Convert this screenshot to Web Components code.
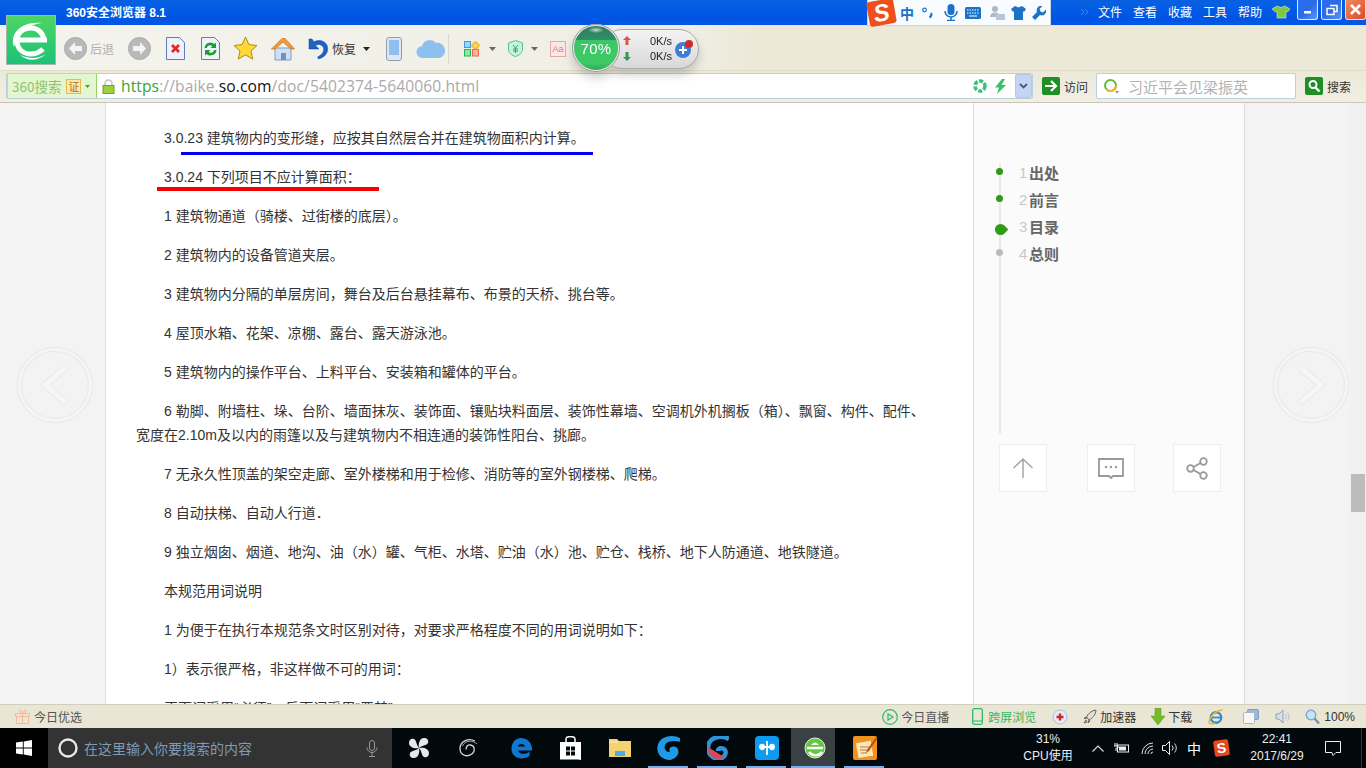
<!DOCTYPE html>
<html lang="zh-CN">
<head>
<meta charset="utf-8">
<title>360安全浏览器 8.1</title>
<style>
  html, body { margin: 0; height: 100%; overflow: hidden; }
  body {
    display: grid;
    grid-template-rows: 25px 45px 33px 601px 24px 40px;
    width: 1366px;
    height: 768px;
    position: relative;
    font-family: "Liberation Sans", "Noto Sans CJK SC", sans-serif;
  }
</style>
</head>
<body>
<title-bar></title-bar>
<tool-bar></tool-bar>
<address-bar></address-bar>
<baike-page>
  <baike-article>
    <p>3.0.23 建筑物内的变形缝，应按其自然层合并在建筑物面积内计算。</p>
    <p>3.0.24 下列项目不应计算面积：</p>
    <p>1 建筑物通道（骑楼、过街楼的底层）。</p>
    <p>2 建筑物内的设备管道夹层。</p>
    <p>3 建筑物内分隔的单层房间，舞台及后台悬挂幕布、布景的天桥、挑台等。</p>
    <p>4 屋顶水箱、花架、凉棚、露台、露天游泳池。</p>
    <p>5 建筑物内的操作平台、上料平台、安装箱和罐体的平台。</p>
    <p>6 勒脚、附墙柱、垛、台阶、墙面抹灰、装饰面、镶贴块料面层、装饰性幕墙、空调机外机搁板（箱）、飘窗、构件、配件、宽度在2.10m及以内的雨篷以及与建筑物内不相连通的装饰性阳台、挑廊。</p>
    <p>7 无永久性顶盖的架空走廊、室外楼梯和用于检修、消防等的室外钢楼梯、爬梯。</p>
    <p>8 自动扶梯、自动人行道．</p>
    <p>9 独立烟囱、烟道、地沟、油（水）罐、气柜、水塔、贮油（水）池、贮仓、栈桥、地下人防通道、地铁隧道。</p>
    <p>本规范用词说明</p>
    <p>1 为便于在执行本规范条文时区别对待，对要求严格程度不同的用词说明如下：</p>
    <p>1）表示很严格，非这样做不可的用词：</p>
    <p>正面词采用“必须”，反面词采用“严禁”；</p>
  </baike-article>
  <baike-sidebar></baike-sidebar>
</baike-page>
<status-bar></status-bar>
<task-bar></task-bar>
<app-logo></app-logo>
<speed-ball></speed-ball>
<ime-bar></ime-bar>

<script>
// Базовый класс: разметка и стили лежат в статическом поле html
class ShadowPart extends HTMLElement {
  connectedCallback() {
    if (this.shadowRoot) return;
    const template = document.createElement('template');
    template.innerHTML = this.constructor.html;
    this.attachShadow({ mode: 'open' }).append(template.content.cloneNode(true));
  }
}

const CJK = '"Noto Sans CJK SC", sans-serif';
const caret = (c = '#444') => `<svg width="7" height="4" viewBox="0 0 7 4"><path d="M0 0h7L3.5 4z" fill="${c}"/></svg>`;

class TitleBar extends ShadowPart {
  static html = `
    <style>
      :host { display: flex; align-items: center; background: linear-gradient(#0a5fe0, #0560e6 20%, #0054e3 70%, #0058e6); color: #fff; font: 12px "Liberation Sans", ${CJK}; padding-bottom: 2px; box-sizing: border-box; }
      .title { margin-left: 66px; font-weight: bold; font-size: 12px; }
      .chev { margin-left: auto; width: 10px; margin-right: 8px; }
      .menu { display: flex; gap: 11px; }
      .shirt { margin-left: 10px; }
      .btns { display: flex; gap: 3px; margin-left: 7px; align-self: flex-start; }
      .btn { width: 19px; height: 19px; border: 1px solid #dfe8fb; border-top: 0; border-radius: 0 0 3px 3px; background: linear-gradient(135deg, #2b6ff0, #2a6ae6 50%, #5f95f5); display: flex; align-items: center; justify-content: center; }
      .close { background: linear-gradient(135deg, #f08a5e, #de4a24); border-color: #f6d8cc; }
    </style>
    <span class="title">360安全浏览器 8.1</span>
    <svg class="chev" viewBox="0 0 10 10" height="10"><path d="M1 2l3 3-3 3M5 2l3 3-3 3" fill="none" stroke="#4f7fd8" stroke-width="1"/></svg>
    <div class="menu"><span>文件</span><span>查看</span><span>收藏</span><span>工具</span><span>帮助</span></div>
    <svg class="shirt" width="18" height="14" viewBox="0 0 18 14"><path d="M5 1l4 1.5L13 1l5 3-2.500 3-1.500-1v7H5V6L3.500 7 0 4z" fill="#7ec83e" stroke="#d8f0c0" stroke-width=".6"/></svg>
    <div class="btns">
      <div class="btn"><svg width="9" height="9" viewBox="0 0 9 9"><rect x="1" y="6" width="7" height="2.500" fill="#fff"/></svg></div>
      <div class="btn"><svg width="12" height="12" viewBox="0 0 12 12"><path d="M4 1.500h7v6H8M1 4.500h7v6H1z" fill="none" stroke="#fff" stroke-width="1.500"/></svg></div>
      <div class="btn close"><svg width="13" height="13" viewBox="0 0 13 13"><path d="M2 2l9 9M11 2l-9 9" stroke="#fff" stroke-width="2.600"/></svg></div>
    </div>`;
}

class ToolBar extends ShadowPart {
  static html = `
    <style>
      :host { display: flex; align-items: center; background: linear-gradient(90deg, #f4f3ed, #f0efe5 50%, #ece9d8 55%); font: 12px ${CJK}; color: #333; padding-left: 64px; box-sizing: border-box; padding-top: 2px; }
      svg { display: block; flex: none; }
      span { flex: none; }
    </style>
    <svg width="23" height="23" viewBox="0 0 23 23"><circle cx="11.500" cy="11.500" r="11" fill="#b9b9b9" stroke="#a8a8a8"/><path d="M11 5l-6 6.500 6 6.500v-4h7V9h-7z" fill="#f4f4f4"/></svg>
    <span style="margin-left:3px;color:#b0b0b0">后退</span>
    <svg style="margin-left:14px" width="23" height="23" viewBox="0 0 23 23"><circle cx="11.500" cy="11.500" r="11" fill="#b9b9b9" stroke="#a8a8a8"/><path d="M12 5l6 6.500-6 6.500v-4H5V9h7z" fill="#f4f4f4"/></svg>
    <svg style="margin-left:15px" width="19" height="23" viewBox="0 0 19 23"><path d="M.5.5h13l5 5v17H.5z" fill="#eef2fc" stroke="#5d7fb8"/><path d="M6 8l7 7M13 8l-7 7" stroke="#e8281e" stroke-width="2.800"/></svg>
    <svg style="margin-left:16px" width="19" height="23" viewBox="0 0 19 23"><path d="M.5.5h13l5 5v17H.5z" fill="#eef2fc" stroke="#5d7fb8"/><path d="M3.500 11a6 6 0 0 1 10-4l1.500-1.500v5.500h-5.500l1.800-1.800a3.400 3.400 0 0 0-5.600 1.800zM15.500 13a6 6 0 0 1-10 4l-1.500 1.500V13h5.500l-1.800 1.800a3.400 3.400 0 0 0 5.600-1.800z" fill="#17a02a"/></svg>
    <svg style="margin-left:13px" width="25" height="25" viewBox="0 0 25 25"><path d="M12.500 1l3.400 7.600 8.100.9-6 5.500 1.700 8.100-7.200-4.200-7.200 4.200L7 15 1 9.500l8.100-.9z" fill="#ffd83c" stroke="#b78a10"/></svg>
    <svg style="margin-left:13px" width="24" height="25" viewBox="0 0 24 25"><path d="M4 12v12h16V12z" fill="#cfe0f6" stroke="#7d9dc4"/><path d="M10 24v-7h5v7z" fill="#6f92bf"/><path d="M0.500 13L11 2.500h3L23.500 13 20 13 12 6l-8 7z" fill="#f29a3c" stroke="#c66c18" stroke-width=".7"/></svg>
    <svg style="margin-left:12px" width="22" height="23" viewBox="0 0 22 23"><path d="M2 2v10h10L8.500 8.500c3-2 7-1 8 2.500 1 4-2 7-6 9l1 2c6-1.500 10-6 9-12-1-5.500-8-8.500-13.500-5L5 2z" fill="#1d62c6" stroke="#124a9e" stroke-width=".5"/></svg>
    <span style="margin-left:3px">恢复</span>
    <span style="margin-left:7px">${caret('#222')}</span>
    <svg style="margin-left:16px" width="16" height="24" viewBox="0 0 16 24"><rect x=".5" y=".5" width="15" height="23" rx="2.500" fill="#dfe6ef" stroke="#8d9db3"/><rect x="3" y="3" width="10" height="15" fill="#8fbff0"/></svg>
    <svg style="margin-left:14px" width="29" height="19" viewBox="0 0 29 19"><path d="M7 19a6 6 0 0 1-1-12 8 8 0 0 1 14-3 6.500 6.500 0 0 1 3 15z" fill="#8dc0ee"/></svg>
    <span style="margin-left:3px;width:1px;height:30px;background:#dcd9c8"></span>
    <svg style="margin-left:15px" width="16" height="16" viewBox="0 0 16 16"><rect x=".5" y=".5" width="6" height="6" fill="#9fd4fb" stroke="#3d9ae8"/><rect x=".5" y="8.500" width="6" height="6.500" fill="#8fe8a8" stroke="#25b84f"/><rect x="8.500" y="8.500" width="6" height="6.500" fill="#f9b3a3" stroke="#ea6a50"/><path d="M10 1h3v2h2v3h-2v2h-3V6H8V3h2z" fill="#ffd75a" stroke="#d99b12" stroke-width=".7"/></svg>
    <span style="margin-left:9px">${caret('#666')}</span>
    <svg style="margin-left:12px" width="15" height="17" viewBox="0 0 15 17"><path d="M7.500.5L14.500 3v6c0 4-3.500 6.500-7 7.500C4 15.500.5 13 .5 9V3z" fill="#c8f2de" stroke="#4cc592"/><path d="M5 5l2.500 3L10 5M5 9h5M5 11h5M7.500 8v5" fill="none" stroke="#25a870"/></svg>
    <span style="margin-left:8px">${caret('#666')}</span>
    <span style="margin-left:12px;width:14px;height:14px;border:1px solid #e6a7a7;background:#fbe8e6;color:#d97c7c;font:9px 'Liberation Sans';display:flex;align-items:center;justify-content:center">Aa</span>`;
}

class AddressBar extends ShadowPart {
  static html = `
    <style>
      :host { display: flex; align-items: flex-start; background: linear-gradient(#ece9d8, #f1efe4); border-top: 1px solid #e0dcc8; border-bottom: 1px solid #c9c6b6; box-sizing: border-box; padding: 2px 0 0 6px; font: 12px ${CJK}; color: #333; }
      .box { display: flex; align-items: center; height: 26px; box-sizing: border-box; border: 1px solid #bcd0de; border-radius: 2px; background: #fff; flex: none; }
      .main { width: 1027px; }
      .engine { display: flex; align-items: center; width: 90px; height: 100%; box-sizing: border-box; background: #e2f7cf; border-right: 1px solid #97d26a; border-left: 1px solid #b8e19a; padding-left: 4px; color: #93bf72; font-size: 13.500px; }
      .cert { display: flex; align-items: center; justify-content: center; margin-left: 5px; width: 13px; height: 13px; border: 1px solid #e8b94c; background: #fde9ac; color: #b5731a; font-size: 11px; line-height: 1; }
      .arr { margin-left: 4px; display: block; }
      .url { margin-left: 6px; font: 15.600px "Open Sans", sans-serif; color: #aaa; white-space: nowrap; letter-spacing: .1px; }
      .url b { font-weight: normal; color: #36a535; }
      .url i { font-style: normal; color: #111; }
      .lock { margin-left: 5px; }
      .tail { margin-left: auto; display: flex; align-items: center; height: 100%; }
      .drop { width: 15px; height: 22px; margin: 0 0 0 8px; background: #c4d5f4; border: 1px solid #b6c7e6; border-radius: 2px; display: flex; align-items: center; justify-content: center; }
      .go { display: flex; align-items: center; gap: 4px; flex: none; height: 26px; }
      .go svg { display: block; }
      .search { width: 200px; margin-left: 8px; padding-left: 6px; }
      .search span { margin-left: 9px; font-size: 15px; color: #b4b4b4; white-space: nowrap; }
    </style>
    <div class="box main">
      <div class="engine">360搜索<span class="cert">证</span><svg class="arr" width="5" height="3" viewBox="0 0 5 3"><path d="M0 0h5L2.500 3z" fill="#4d9a30"/></svg></div>
      <svg class="lock" width="13" height="15" viewBox="0 0 13 15"><path d="M3 7V4.500a3.500 3.500 0 0 1 7 0V7" fill="none" stroke="#c2c2c2" stroke-width="1.500"/><rect x="1" y="6.500" width="11" height="8" fill="#9bd13c" stroke="#6ea51f"/></svg>
      <span class="url"><b>https</b>://baike.<i>so.com</i>/doc/5402374-5640060.html</span>
      <div class="tail">
        <svg width="14" height="14" viewBox="0 0 14 14"><circle cx="7" cy="7" r="5" fill="none" stroke="#3fbf78" stroke-width="3.600" stroke-dasharray="4 1.500"/></svg>
        <svg style="margin-left:7px" width="13" height="15" viewBox="0 0 13 15"><path d="M8 0L1 8.500h4L3 15l9-9H7.500L11 0z" fill="#35c463"/></svg>
        <div class="drop"><svg width="9" height="6" viewBox="0 0 9 6"><path d="M1 1l3.500 3.500L8 1" fill="none" stroke="#44598a" stroke-width="1.800"/></svg></div>
      </div>
    </div>
    <div class="go" style="margin-left:9px">
      <svg width="18" height="18" viewBox="0 0 18 18"><rect width="18" height="18" rx="2" fill="#1d8f24"/><path d="M3 9h11M9 4l5 5-5 5" fill="none" stroke="#fff" stroke-width="2.200"/></svg>
      <span>访问</span>
    </div>
    <div class="box search">
      <svg width="16" height="16" viewBox="0 0 16 16"><circle cx="7.500" cy="7.500" r="5.500" fill="none" stroke="#63b93a" stroke-width="2"/><path d="M13 7.500a5.500 5.500 0 0 1-9.500 3.800" fill="none" stroke="#f4b823" stroke-width="2"/><path d="M12 13h4l-2 2.500z" fill="#888"/></svg>
      <span>习近平会见梁振英</span>
    </div>
    <div class="go" style="margin-left:9px">
      <svg width="18" height="18" viewBox="0 0 18 18"><rect width="18" height="18" rx="2" fill="#1d8f24"/><circle cx="8" cy="7.500" r="3.500" fill="none" stroke="#fff" stroke-width="2"/><path d="M10.500 10.500l4 4" stroke="#fff" stroke-width="2.400"/></svg>
      <span>搜索</span>
    </div>`;
}

const sideArrow = (left, d) => `
  <svg class="arrow" style="left:${left}px" width="76" height="78" viewBox="0 0 76 78">
    <circle cx="38" cy="39" r="35.500" fill="none" stroke="#e8e8e8" stroke-width="5"/>
    <circle cx="38" cy="39" r="35.500" fill="none" stroke="#f5f5f5" stroke-width="3"/>
    <path d="${d}" fill="none" stroke="#e8e8e8" stroke-width="7" stroke-linecap="round" stroke-linejoin="round"/>
    <path d="${d}" fill="none" stroke="#f6f6f6" stroke-width="5.500" stroke-linecap="round" stroke-linejoin="round"/>
  </svg>`;

class BaikePage extends ShadowPart {
  static html = `
    <style>
      :host { display: flex; position: relative; overflow: hidden; background: #f3f3f3; }
      .wrap { display: flex; margin-left: 105px; height: 100%; }
      .track { margin-left: auto; width: 16px; background: #f1f1f1; position: relative; }
      .thumb { position: absolute; top: 371px; left: 1px; width: 14px; height: 38px; background: #bcbcbc; }
      .mark { position: absolute; }
      .arrow { position: absolute; top: 243px; }
    </style>
    <div class="wrap"><slot></slot></div>
    <div class="track"><div class="thumb"></div></div>
    <div class="mark" style="left:181px;top:49px;width:412px;height:3px;background:#0000f5"></div>
    <div class="mark" style="left:157px;top:84px;width:222px;height:4px;background:#f50000"></div>
    ${sideArrow(17, 'M47 23L28 39l19 16')}
    ${sideArrow(1273, 'M29 23l19 16-19 16')}`;
}

class BaikeArticle extends ShadowPart {
  static html = `
    <style>
      :host { display: block; width: 869px; height: 100%; box-sizing: border-box; background: #fff; border-left: 1px solid #ddd; border-right: 1px solid #ddd; padding: 23px 38px 0 30px; overflow: hidden; color: #333; font: 14px/24px "Liberation Sans", ${CJK}; }
      ::slotted(p) { margin: 0 0 15px; text-indent: 28px; }
    </style>
    <slot></slot>`;
}

class BaikeSidebar extends ShadowPart {
  static html = `
    <style>
      :host { display: block; width: 271px; height: 100%; box-sizing: border-box; background: #fbfbfb; border-right: 1px solid #ddd; padding: 61px 0 0 25px; }
      .nav { display: flow-root; height: 270px; box-sizing: border-box; border-left: 2px solid #e8e8e8; }
      .row { display: flex; align-items: center; height: 27px; padding-left: 18px; position: relative; color: #666; font: bold 15px ${CJK}; }
      .row:first-child { margin-top: -5px; }
      .row span { font: 15px "Liberation Sans"; color: #c8c8c8; width: 10px; }
      .row::before { content: ""; position: absolute; left: -5px; top: 9px; width: 7px; height: 7px; border-radius: 50%; background: #2f9a14; }
      .row.on::before { left: -6px; top: 11px; width: 11px; height: 11px; border-radius: 50% 0 50% 50%; transform: rotate(45deg); }
      .row.off::before { background: #bbb; }
      .btns { display: flex; margin-top: 10px; }
      .b { width: 48px; height: 48px; box-sizing: border-box; border: 1px solid #eee; background: #fff; display: flex; align-items: center; justify-content: center; flex: none; }
    </style>
    <div class="nav">
      <div class="row"><span>1</span>出处</div>
      <div class="row"><span>2</span>前言</div>
      <div class="row on"><span>3</span>目录</div>
      <div class="row off"><span>4</span>总则</div>
    </div>
    <div class="btns">
      <div class="b"><svg width="22" height="22" viewBox="0 0 22 22"><path d="M11 21V2M1.500 11L11 2l9.500 9" fill="none" stroke="#a6a6a6" stroke-width="1.500"/></svg></div>
      <div class="b" style="margin-left:40px"><svg width="26" height="22" viewBox="0 0 26 22"><path d="M1 2h24v17H15l-2 2-2-2H1z" fill="none" stroke="#999" stroke-width="1.800"/><circle cx="8" cy="10" r="1.200" fill="#999"/><circle cx="13" cy="10" r="1.200" fill="#999"/><circle cx="18" cy="10" r="1.200" fill="#999"/></svg></div>
      <div class="b" style="margin-left:38px"><svg width="22" height="23" viewBox="0 0 22 23"><circle cx="17.500" cy="4.500" r="3.300" fill="none" stroke="#999" stroke-width="1.800"/><circle cx="4.500" cy="11.500" r="3.300" fill="none" stroke="#999" stroke-width="1.800"/><circle cx="17.500" cy="18.500" r="3.300" fill="none" stroke="#999" stroke-width="1.800"/><path d="M7.500 10l7-4M7.500 13l7 4" stroke="#999" stroke-width="1.800"/></svg></div>
    </div>`;
}

class StatusBar extends ShadowPart {
  static html = `
    <style>
      :host { display: flex; align-items: center; background: #e9e6d5; border-top: 1px solid #d2cfbe; box-sizing: border-box; padding: 0 0 0 15px; font: 12px ${CJK}; color: #555; white-space: nowrap; }
      svg { display: block; flex: none; }
      span { flex: none; }
      .right { margin-left: auto; display: flex; align-items: center; padding-right: 11px; }
    </style>
    <svg width="15" height="15" viewBox="0 0 15 15"><path d="M.5 4.500h14v3H.5zM1.500 7.500h12v7h-12zM7.500 4.500v10M7.500 4.500C5 4.500 3 1 5 .8s2.500 3.700 2.500 3.700C8 3 10 .5 11 1c1 .8-1 3.500-3.500 3.500" fill="none" stroke="#f6b89b"/></svg>
    <span style="margin-left:4px">今日优选</span>
    <div class="right">
      <svg width="16" height="16" viewBox="0 0 16 16"><circle cx="8" cy="8" r="7.300" fill="none" stroke="#2dbb6a" stroke-width="1.200"/><path d="M6 4.800v6.400L11 8z" fill="none" stroke="#2dbb6a" stroke-width="1.200"/></svg>
      <span style="margin-left:3px">今日直播</span>
      <svg style="margin-left:23px" width="11" height="17" viewBox="0 0 11 17"><rect x=".7" y=".7" width="9.600" height="15.600" rx="1.500" fill="none" stroke="#2dbb6a" stroke-width="1.300"/><path d="M1 13h9" stroke="#2dbb6a"/></svg>
      <span style="margin-left:5px;color:#34b860">跨屏浏览</span>
      <svg style="margin-left:16px" width="16" height="16" viewBox="0 0 16 16"><circle cx="8" cy="8" r="7" fill="#e4ecf6" stroke="#aac0dc"/><path d="M6.800 4.500h2.400v2.300h2.300v2.400H9.200v2.300H6.800V9.200H4.500V6.800h2.300z" fill="#d6242c"/></svg>
      <svg style="margin-left:15px" width="14" height="15" viewBox="0 0 14 15"><path d="M13 1C8 1.500 5 5 3.500 8l2.500 3c3-1.500 6.500-4.500 7-10zM3.500 8L1 9l2 1zM6 11l-1 3 2-2zM3 11l-2 3 3-1z" fill="#e2e0d4" stroke="#666"/></svg>
      <span style="margin-left:3px;color:#333">加速器</span>
      <svg style="margin-left:15px" width="14" height="17" viewBox="0 0 14 17"><path d="M4 0h6v8h4l-7 9-7-9h4z" fill="#76bb2a" stroke="#5d9a1e" stroke-width=".5"/></svg>
      <span style="margin-left:3px;color:#333">下载</span>
      <svg style="margin-left:16px" width="16" height="16" viewBox="0 0 16 16"><circle cx="8" cy="8.500" r="5.200" fill="none" stroke="#2f8be0" stroke-width="2.400"/><path d="M3 8.500h10" stroke="#2f8be0" stroke-width="1.800"/><path d="M14.500 1C11 .5 3 4.500 1 13c0 2 3 2.500 6 1" fill="none" stroke="#f3b226" stroke-width="1.500"/></svg>
      <svg style="margin-left:19px" width="16" height="15" viewBox="0 0 16 15"><rect x="4.500" y=".5" width="11" height="10" rx="1" fill="#9ab8dc" stroke="#7f9dc4"/><rect x=".5" y="3.500" width="11" height="11" rx="1" fill="#f7f7f4" stroke="#a7b4c4"/></svg>
      <svg style="margin-left:16px" width="16" height="15" viewBox="0 0 16 15"><path d="M1 5h3l4-4v13l-4-4H1z" fill="#d7dde6" stroke="#98a4b4"/><path d="M10.500 5a4 4 0 0 1 0 5M12.500 3.500a6 6 0 0 1 0 8" fill="none" stroke="#a9bdd8"/></svg>
      <svg style="margin-left:14px" width="15" height="16" viewBox="0 0 15 16"><circle cx="6" cy="6" r="4.800" fill="#c8e2f8" stroke="#7c9fc6" stroke-width="1.300"/><path d="M9.500 9.500l4.500 5" stroke="#7b8fa8" stroke-width="2.400"/></svg>
      <span style="margin-left:4px;color:#333;font-family:'Liberation Sans'">100%</span>
    </div>`;
}

class TaskBar extends ShadowPart {
  static html = `
    <style>
      :host { display: flex; background: #02090d; color: #fff; font: 12px "Liberation Sans", ${CJK}; }
      svg { display: block; flex: none; }
      .start { width: 48px; background: #000; display: flex; align-items: center; justify-content: center; flex: none; }
      .find { width: 344px; background: #333; display: flex; align-items: center; padding-left: 10px; box-sizing: border-box; flex: none; }
      .find span { margin-left: 6px; color: #7f9ab4; font-size: 14px; white-space: nowrap; font-family: ${CJK}; }
      .find svg:last-child { margin-left: auto; margin-right: 14px; }
      .apps { display: flex; flex: none; padding-left: 2px; }
      .app { width: 49px; height: 40px; box-sizing: border-box; display: flex; align-items: center; justify-content: center; position: relative; flex: none; }
      .app.run::after { content: ""; position: absolute; left: 4px; right: 5px; bottom: 0; height: 2px; background: #6fb0f2; }
      .app.on { background: #3a4144; width: 44px; margin-right: 5px; padding-left: 4px; }
      .app.on::after { left: 0; right: 0; }
      .cpu { margin-left: 135px; width: 48px; text-align: center; line-height: 17px; padding-top: 3px; flex: none; color: #eee; white-space: nowrap; display: flex; flex-direction: column; align-items: center; }
      .tray { display: flex; align-items: center; margin-left: 20px; flex: none; }
      .zh { margin-left: 8px; font: 14px ${CJK}; width: 16px; }
      .so { margin-left: 11px; width: 15px; height: 16px; background: #e8481c; border-radius: 2px; transform: rotate(-8deg); color: #fff; font: bold 14px/16px "Liberation Sans"; text-align: center; }
      .clock { margin-left: 18px; width: 60px; text-align: center; line-height: 17px; padding-top: 3px; color: #eee; flex: none; }
      .note { margin-left: 18px; }
      .edge { margin-left: auto; width: 4px; background: #000; border-left: 1px solid #333; }
    </style>
    <div class="start"><svg width="16" height="16" viewBox="0 0 16 16"><path d="M0 2.500L6.800 1.500v6H0zM7.700 1.400L16 0v7.500H7.700zM0 8.400h6.800v6L0 13.500zM7.700 8.400H16V16l-8.300-1.400z" fill="#fff"/></svg></div>
    <div class="find">
      <svg width="20" height="20" viewBox="0 0 20 20"><circle cx="10" cy="10" r="8.500" fill="none" stroke="#e8e8e8" stroke-width="2.400"/></svg>
      <span>在这里输入你要搜索的内容</span>
      <svg width="12" height="17" viewBox="0 0 12 17"><rect x="3.500" y=".5" width="5" height="10" rx="2.500" fill="none" stroke="#999"/><path d="M1 7.500a5 5 0 0 0 10 0M6 12.500V16M3 16.500h6" fill="none" stroke="#999"/></svg>
    </div>
    <div class="apps">
      <div class="app"><svg width="22" height="22" viewBox="0 0 22 22"><path d="M11 11C8 8 9 4 6 2 3 1 1 3 1 6c0 4 5 6 10 5zM11 11c3-3 7-2 9-5 1-3-1-5-4-5-4 0-6 5-5 10zM11 11c-3 3-7 2-9 5-1 3 1 5 4 5 4 0 6-5 5-10zM11 11c3 3 2 7 5 9 3 1 5-1 5-4 0-4-5-6-10-5z" fill="#e4e8ea"/></svg></div>
      <div class="app"><svg width="20" height="20" viewBox="0 0 20 20"><path d="M17 3C11-.5 2 3 2 10.500s8 9 12.500 5c3-3 2-8-2-8.500-3-.3-5 2-4 4.500" fill="none" stroke="#d6d6d6" stroke-width="1.300"/><path d="M19 6C15 2 7 2 4.500 8" fill="none" stroke="#aaa"/></svg></div>
      <div class="app" style="margin-left:5px"><svg width="21" height="22" viewBox="0 0 21 22"><path d="M10 1C4 1 .5 6 .5 12c0 6 5 9.500 10 9.500 3 0 6-1 8-2.500v-4.500c-3 2.500-10 4-11.500-1H21C21.500 5.500 16 1 10 1zM7 9.500C7 6 14 6 14 9.500z" fill="#0e78d0"/></svg></div>
      <div class="app"><svg width="21" height="24" viewBox="0 0 21 24"><path d="M0 6h21v18l-3-.5H0z" fill="#fff"/><path d="M6 6V3q0-2.500 4.500-2.500T15 3v3" fill="none" stroke="#fff" stroke-width="1.500"/><path d="M6 10.500h4v4H6zM11 10.500h4v4h-4zM6 15.500h4v4H6zM11 15.500h4v4h-4z" fill="#02090d"/></svg></div>
      <div class="app"><svg width="22" height="18" viewBox="0 0 22 18"><path d="M0 0h8l2 2h12v16H0z" fill="#f3d272"/><path d="M0 3h9" stroke="#fff3c0"/><path d="M6 17v-5h10v5z" fill="#4fa8e8"/></svg></div>
      <div class="app run"><svg width="24" height="25" viewBox="0 0 24 25"><path d="M23 3c-7-4-21-3-22 9 0 8 7 12 13 11 5-1 8-6 6-10-2-3-7-2-7 1 0 1.500 2 2 3 1-6 4-10-1-9-5 1-5 8-7 16-5" fill="#1e9be6" stroke="#1e9be6" stroke-width="1.500"/></svg></div>
      <div class="app run"><svg width="22" height="24" viewBox="0 0 22 24"><path d="M22 3C15-1 1 0 1 12c0 7 6 11 11 11 5-1 8-5 6-9-2-3-7-2-7 1" fill="none" stroke="#2f93d8" stroke-width="4.500"/><path d="M1 11l16 10-5 3-10-5z" fill="#d8485a"/></svg></div>
      <div class="app run"><svg width="24" height="24" viewBox="0 0 24 24"><rect width="24" height="24" rx="4" fill="#0e9bef"/><path d="M12 5v14M5 11c0-3 4-3 4 0s-4 3-4 0h14c0-3-4-3-4 0s4 3 4 0" fill="none" stroke="#fff" stroke-width="1.800"/></svg></div>
      <div class="app run on"><svg width="22" height="24" viewBox="0 0 22 24"><circle cx="11" cy="12" r="10" fill="#5fc83e" stroke="#e8f4de"/><path d="M3 12h16M5 16a8 8 0 0 0 13 0" fill="none" stroke="#fff" stroke-width="2.400"/><path d="M7 9q4-5 8 0z" fill="#fff"/></svg></div>
      <div class="app run"><svg width="24" height="24" viewBox="0 0 24 24"><rect width="24" height="24" rx="2" fill="#f0921e"/><rect x="4" y="6" width="15" height="15" fill="#fde8b8" transform="rotate(-10 11 13)"/><path d="M7 11h9M7 14h9M8 17h6" stroke="#b57a30"/><path d="M23 1L14 14l-1 3 3-2L24 3z" fill="#c24a1c"/></svg></div>
    </div>
    <div class="cpu"><span>31%</span><span>CPU使用</span></div>
    <div class="tray">
      <svg width="12" height="7" viewBox="0 0 12 7"><path d="M.5 6.500L6 1l5.500 5.500" fill="none" stroke="#ddd" stroke-width="1.200"/></svg>
      <svg style="margin-left:10px" width="16" height="12" viewBox="0 0 16 12"><rect x="3.500" y="3" width="11" height="7" fill="none" stroke="#eee"/><rect x="5" y="4.500" width="7" height="4" fill="#eee"/><path d="M1 1v3M3 1v3M0 4h4v2H2v3" stroke="#eee" fill="none"/></svg>
      <svg style="margin-left:11px" width="13" height="13" viewBox="0 0 13 13"><path d="M1 12a11 11 0 0 1 11-11M4 12a8 8 0 0 1 8-8M7 12a5 5 0 0 1 5-5M10 12a2 2 0 0 1 2-2" fill="none" stroke="#ddd"/></svg>
      <svg style="margin-left:8px" width="17" height="14" viewBox="0 0 17 14"><path d="M.5 4.500h3l4-4v13l-4-4h-3z" fill="none" stroke="#eee"/><path d="M10 4.500a3.500 3.500 0 0 1 0 5M12.500 2.500a6.500 6.500 0 0 1 0 9" fill="none" stroke="#ddd"/></svg>
      <span class="zh">中</span>
      <span class="so">S</span>
    </div>
    <div class="clock">22:41<br>2017/6/29</div>
    <svg class="note" style="align-self:center" width="16" height="15" viewBox="0 0 16 15"><path d="M.5.5h15v11H11l-3 3-1-3H.5z" fill="none" stroke="#eee"/></svg>
    <div class="edge"></div>`;
}

// Логотип браузера лежит поверх заголовка и панели
class AppLogo extends ShadowPart {
  static html = `
    <style>:host { position: absolute; left: 6px; top: 15px; width: 50px; height: 50px; }</style>
    <svg width="50" height="50" viewBox="0 0 50 50">
      <defs><linearGradient id="g" x1="0" y1="0" x2="0" y2="1"><stop offset="0" stop-color="#4ed564"/><stop offset="1" stop-color="#1bc277"/></linearGradient></defs>
      <rect x=".5" y=".5" width="49" height="49" fill="url(#g)" stroke="#a4b8ae"/>
      <path d="M13 25H41M38 25C37 17 31 13 25 13 17 13 11 18 11 26c0 8 6 13 14 13 5 0 9-2 12-5" fill="none" stroke="#fff" stroke-width="5"/>
      <path d="M8 32C3 18 16 6 36 8 25 9 12 16 8 32zM14 40c8 7 18 6 26-1-6 4-15 6-26 1z" fill="#fff"/>
    </svg>`;
}

// Индикатор памяти и скорости сети
class SpeedBall extends ShadowPart {
  static html = `
    <style>
      :host { position: absolute; left: 572px; top: 24px; width: 127px; height: 49px; font: 11px "Liberation Sans", sans-serif; color: #222; filter: drop-shadow(0 6px 5px rgba(0,0,0,.18)); }
      .pill { position: absolute; left: 30px; right: 0; top: 5px; height: 40px; box-sizing: border-box; border: 1px solid #a8a8a8; border-radius: 20px; background: linear-gradient(#f4f4f4, #d8d8d8); }
      .ball { position: absolute; left: 0; top: 0; width: 48px; height: 48px; box-sizing: border-box; border: 2px solid #e8e8e8; outline: 1px solid #9a9a9a; outline-offset: -1px; border-radius: 50%; overflow: hidden; background: radial-gradient(ellipse 8px 3px at 50% 4px, rgba(255,255,255,.75), transparent), linear-gradient(#2d7d5c, #2f8f68 32%, #3cc766 33%, #3ec964 85%, #30a85a); color: #fff; font-size: 15px; display: flex; align-items: center; justify-content: center; letter-spacing: .3px; }
      .n { position: absolute; left: 78px; }
      svg { position: absolute; }
    </style>
    <div class="pill"></div>
    <div class="ball">70%</div>
    <svg style="left:51px;top:12px" width="8" height="9" viewBox="0 0 8 9"><path d="M4 0l4 4H5.500v5h-3V4H0z" fill="#dc5640"/></svg>
    <svg style="left:51px;top:28px" width="8" height="9" viewBox="0 0 8 9"><path d="M4 9L8 5H5.500V0h-3v5H0z" fill="#2f9a50"/></svg>
    <span class="n" style="top:11px">0K/s</span>
    <span class="n" style="top:26px">0K/s</span>
    <svg style="left:101px;top:15px" width="22" height="20" viewBox="0 0 22 20"><circle cx="10" cy="11" r="8" fill="#3d7fd6"/><path d="M10 7v8M6 11h8" stroke="#fff" stroke-width="2"/><circle cx="16" cy="5" r="4" fill="#d42a2a"/></svg>`;
}

// Панель метода ввода поверх заголовка окна
class ImeBar extends ShadowPart {
  static html = `
    <style>
      :host { position: absolute; left: 867px; top: 0; width: 184px; height: 26px; box-sizing: border-box; background: #f8fbff; border: 1px solid #c6d5e8; border-top: 0; display: flex; align-items: center; font: bold 14px ${CJK}; color: #1a73c6; }
      .s { width: 27px; height: 25px; background: #ee4f1c; color: #fff; font: italic bold 24px/25px "Liberation Sans"; text-align: center; transform: rotate(-10deg); border-radius: 3px; flex: none; }
      svg { display: block; flex: none; }
    </style>
    <div class="s">S</div>
    <span style="margin-left:5px">中</span>
    <svg style="margin-left:8px" width="11" height="13" viewBox="0 0 11 13"><circle cx="2.500" cy="4" r="1.800" fill="none" stroke="#1a73c6" stroke-width="1.200"/><path d="M9 7c1 1.500 0 3.500-1.500 4.500" fill="none" stroke="#1a73c6" stroke-width="2.200"/></svg>
    <svg style="margin-left:11px" width="14" height="17" viewBox="0 0 14 17"><rect x="3.500" y="0" width="7" height="11" rx="3.500" fill="#1a73c6"/><path d="M1 7a6 6 0 0 0 12 0M7 13v3M3 16.500h8" fill="none" stroke="#1a73c6" stroke-width="1.500"/></svg>
    <svg style="margin-left:7px" width="16" height="12" viewBox="0 0 16 12"><rect width="16" height="12" rx="1.500" fill="#1a73c6"/><path d="M2 3h12M2 6h12" stroke="#fff" stroke-dasharray="1.500 1"/><path d="M4 9h8" stroke="#fff"/></svg>
    <svg style="margin-left:9px" width="15" height="15" viewBox="0 0 15 15"><circle cx="5" cy="4" r="3" fill="#aeb9c6"/><path d="M0 12c0-3 2-4.500 5-4.500S10 9 10 12z" fill="#aeb9c6"/><rect x="6" y="9" width="9" height="6" fill="#bcc6d2"/></svg>
    <svg style="margin-left:6px" width="15" height="14" viewBox="0 0 15 14"><path d="M4 0l3.500 1.500L11 0l4 3-2 3-1-.7V14H3V5.300L2 6 0 3z" fill="#1a73c6"/></svg>
    <svg style="margin-left:6px" width="14" height="14" viewBox="0 0 14 14"><path d="M14 3.500L11 6.500 8.500 5.500 7.500 3 10.500 0a4.500 4.500 0 0 0-5.500 6L0 11l3 3 5-5a4.500 4.500 0 0 0 6-5.500z" fill="#1a73c6"/></svg>`;
}

customElements.define('title-bar', TitleBar);
customElements.define('tool-bar', ToolBar);
customElements.define('address-bar', AddressBar);
customElements.define('baike-page', BaikePage);
customElements.define('baike-article', BaikeArticle);
customElements.define('baike-sidebar', BaikeSidebar);
customElements.define('status-bar', StatusBar);
customElements.define('task-bar', TaskBar);
customElements.define('app-logo', AppLogo);
customElements.define('speed-ball', SpeedBall);
customElements.define('ime-bar', ImeBar);
</script>
</body>
</html>
